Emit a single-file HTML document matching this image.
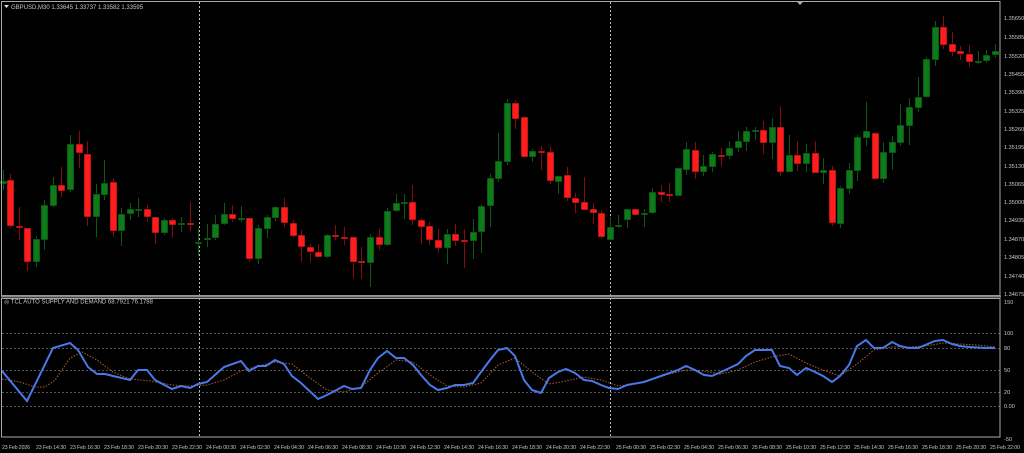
<!DOCTYPE html>
<html><head><meta charset="utf-8"><style>
html,body{margin:0;padding:0;background:#000;width:1024px;height:453px;overflow:hidden}
svg{display:block}
text{font-family:"Liberation Sans",sans-serif;fill:#c8c8c8}
.t text{font-size:5.2px}
</style></head><body>
<svg id="s" width="1024" height="453" xmlns="http://www.w3.org/2000/svg">
<rect width="1024" height="453" fill="#000"/>
<g id="grid" stroke="#555" stroke-dasharray="2,2" stroke-width="1">
<line x1="2" y1="333.5" x2="1000" y2="333.5"/><line x1="2" y1="348.5" x2="1000" y2="348.5"/>
<line x1="2" y1="370.5" x2="1000" y2="370.5"/><line x1="2" y1="392.5" x2="1000" y2="392.5"/>
<line x1="2" y1="406.5" x2="1000" y2="406.5"/>
</g>
<g stroke="#bbb" stroke-dasharray="2,2"><line x1="199.5" y1="2" x2="199.5" y2="437"/><line x1="610.5" y1="2" x2="610.5" y2="437"/></g>
<g id="c"></g>
<polyline id="o" fill="none" stroke="#b0602a" stroke-width="1" stroke-dasharray="1.5,1.5"/>
<polyline id="b" fill="none" stroke="#4a78e8" stroke-width="2"/>
<g fill="none" stroke="#a8a8a8">
<rect x="1.5" y="1.5" width="998.5" height="294"/>
<rect x="1.5" y="298.5" width="998.5" height="138.5"/>
</g>
<line x1="1" y1="296.5" x2="1001" y2="296.5" stroke="#888" stroke-width="2"/>
<path d="M797 2 L803 2 L800 5 Z" fill="#aaa"/>
<path d="M4 5 L9 5 L6.5 8 Z" fill="#ddd"/>
<text x="11" y="9" font-size="6">GBPUSD,M30  1.33645 1.33737 1.33582 1.33595</text>
<text x="4" y="303.5" font-size="6">◎ TCL AUTO SUPPLY AND DEMAND 68.7921 76.1788</text>
<g font-size="5.6">
<text x="1004" y="20">1.35650</text><text x="1004" y="39">1.35585</text><text x="1004" y="58">1.35520</text>
<text x="1004" y="76">1.35455</text><text x="1004" y="94">1.35390</text><text x="1004" y="113">1.35325</text>
<text x="1004" y="131">1.35260</text><text x="1004" y="149">1.35195</text><text x="1004" y="168">1.35130</text>
<text x="1004" y="186">1.35065</text><text x="1004" y="204">1.35000</text><text x="1004" y="222">1.34935</text>
<text x="1004" y="241">1.34870</text><text x="1004" y="259">1.34805</text><text x="1004" y="278">1.34740</text>
<text x="1004" y="296">1.34675</text>
<text x="1004" y="304">150</text><text x="1004" y="335">100</text><text x="1004" y="350">80</text>
<text x="1004" y="372">50</text><text x="1004" y="394">20</text><text x="1004" y="408">0.00</text>
<text x="1004" y="441">-50</text>
</g>
<g class="t">
<text x="2" y="449" textLength="28">23 Feb 2026</text><text x="36" y="449" textLength="30">23 Feb 14:30</text><text x="70" y="449" textLength="30">23 Feb 16:30</text>
<text x="104" y="449" textLength="30">23 Feb 18:30</text><text x="138" y="449" textLength="30">23 Feb 20:30</text><text x="172" y="449" textLength="30">23 Feb 22:30</text>
<text x="206" y="449" textLength="30">24 Feb 00:30</text><text x="240" y="449" textLength="30">24 Feb 02:30</text><text x="274" y="449" textLength="30">24 Feb 04:30</text>
<text x="308" y="449" textLength="30">24 Feb 06:30</text><text x="342" y="449" textLength="30">24 Feb 08:30</text><text x="376" y="449" textLength="30">24 Feb 10:30</text>
<text x="410" y="449" textLength="30">24 Feb 12:30</text><text x="444" y="449" textLength="30">24 Feb 14:30</text><text x="478" y="449" textLength="30">24 Feb 16:30</text>
<text x="512" y="449" textLength="30">24 Feb 18:30</text><text x="546" y="449" textLength="30">24 Feb 20:30</text><text x="580" y="449" textLength="30">24 Feb 22:30</text>
<text x="616" y="449" textLength="30">25 Feb 00:30</text><text x="650" y="449" textLength="30">25 Feb 02:30</text><text x="684" y="449" textLength="30">25 Feb 04:30</text>
<text x="718" y="449" textLength="30">25 Feb 06:30</text><text x="752" y="449" textLength="30">25 Feb 08:30</text><text x="786" y="449" textLength="30">25 Feb 10:30</text>
<text x="820" y="449" textLength="30">25 Feb 12:30</text><text x="854" y="449" textLength="30">25 Feb 14:30</text><text x="888" y="449" textLength="30">25 Feb 16:30</text>
<text x="922" y="449" textLength="30">25 Feb 18:30</text><text x="956" y="449" textLength="30">25 Feb 20:30</text><text x="990" y="449" textLength="30">25 Feb 22:00</text>
</g>
</svg>
<script>
var C=[[3,'g',181,184,170,190],[10,'r',180,226,174,228],[19,'r',226,228,207,240],[27,'r',228,262,228,271],[36,'g',239,262,236,267],[44,'g',205,240,200,250],[53,'g',185,206,177,207],[61,'r',185,191,167,197],[70,'g',144,190,135,192],[79,'r',144,153,131,168],[87,'r',154,217,141,226],[96,'g',194,217,184,237],[104,'g',183,195,160,200],[113,'r',182,231,178,237],[121,'g',214,231,208,246],[130,'g',209,214,203,220],[138,'g',209,210,198,217],[147,'r',209,217,205,222],[155,'r',217,233,217,244],[164,'g',220,233,218,235],[172,'r',220,225,218,238],[181,'g',223,225,217,232],[190,'r',223,225,202,231],[198,'g',242,243,228,256],[207,'g',238,239,224,247],[215,'g',224,238,215,240],[224,'g',214,224,203,225],[232,'r',214,219,205,222],[241,'g',218,219,206,222],[249,'r',218,259,218,262],[258,'g',228,259,225,264],[267,'g',217,229,215,238],[275,'g',207,218,206,221],[284,'r',207,223,198,227],[293,'r',223,236,220,238],[301,'r',235,247,230,262],[310,'r',247,252,244,262],[318,'r',252,257,244,258],[327,'g',235,257,234,258],[335,'r',235,237,225,240],[344,'r',237,238,227,245],[353,'r',237,262,237,278],[361,'r',261,263,247,279],[370,'g',237,263,234,287],[379,'r',237,245,229,250],[387,'g',211,245,208,246],[396,'g',203,211,194,212],[404,'g',202,203,194,219],[412,'r',202,220,185,225],[421,'r',220,227,218,244],[429,'r',226,240,222,245],[438,'r',240,248,229,253],[447,'g',234,248,229,264],[455,'r',234,241,224,246],[464,'r',240,241,229,268],[473,'g',232,241,219,259],[481,'g',206,232,204,253],[490,'g',178,206,174,227],[498,'g',161,179,133,182],[507,'g',103,162,99,165],[515,'r',103,119,100,129],[524,'r',117,157,116,157],[532,'g',151,157,149,162],[541,'r',151,153,146,170],[550,'r',152,181,147,184],[558,'g',176,182,176,194],[567,'r',175,198,167,201],[575,'r',198,203,193,213],[584,'r',202,210,177,210],[593,'r',209,213,203,224],[601,'r',213,237,210,239],[610,'g',227,240,217,240],[618,'g',225,227,215,228],[627,'g',209,220,209,228],[635,'r',209,215,209,215],[644,'g',213,214,209,227],[652,'g',192,213,188,214],[661,'r',192,195,185,202],[669,'r',194,195,183,202],[678,'g',168,196,168,196],[686,'g',149,170,142,175],[695,'r',150,172,142,179],[703,'g',166,172,155,176],[712,'g',154,167,152,172],[721,'r',155,156,148,166],[729,'g',148,156,141,159],[738,'g',141,148,131,152],[746,'g',131,142,127,151],[755,'g',130,131,127,140],[763,'r',130,143,121,154],[772,'g',127,143,118,159],[780,'r',127,172,106,176],[789,'g',155,172,135,172],[797,'r',155,164,141,171],[806,'g',153,164,144,172],[815,'r',153,173,141,173],[823,'g',170,173,158,184],[832,'r',170,223,166,226],[840,'g',188,224,186,228],[849,'g',170,189,163,194],[857,'g',137,171,135,181],[866,'g',131,138,102,146],[875,'r',133,179,132,180],[883,'g',152,179,142,183],[892,'g',142,153,136,170],[900,'g',125,143,104,146],[909,'g',107,126,98,145],[918,'g',97,108,77,112],[926,'g',59,97,57,98],[935,'g',27,60,21,66],[943,'r',27,45,16,49],[952,'r',44,52,32,56],[960,'r',51,54,46,60],[969,'r',54,62,45,67],[978,'g',61,63,51,64],[986,'g',55,61,50,63],[995,'g',51,55,44,58]];
var h='';C.forEach(function(c){var x=c[0],bc=c[1]=='r'?'#ff1c1c':'#0e7a1a',wc=c[1]=='r'?'#8a0a0a':'#0a5a12';var t=c[2],b=Math.max(c[3],t+2);
h+='<line x1="'+(x+.5)+'" y1="'+c[4]+'" x2="'+(x+.5)+'" y2="'+c[5]+'" stroke="'+wc+'"/>';
h+='<rect x="'+(x-3)+'" y="'+t+'" width="7" height="'+(b-t)+'" fill="'+bc+'" stroke="#000" stroke-width=".5"/>';});
document.getElementById('c').innerHTML=h;
document.getElementById('b').setAttribute('points',"2,371 27,401 53,348 70,343 78,350 88,367 97,374 105,374 113,376 130,380 138,370 147,370 155,380 172,389 181,386 190,388 198,384 207,382 224,367 241,361 249,371 258,366 266,366 275,360 284,364 292,376 301,383 318,399 327,395 344,386 352,389 361,388 370,370 378,358 387,351 396,358 404,358 413,365 421,375 430,385 438,390 447,388 455,385 464,385 473,383 481,372 490,360 498,350 507,348 515,356 524,380 532,390 541,393 549,378 558,372 566,369 575,373 584,380 592,381 601,385 609,388 618,389 627,385 644,382 661,376 678,370 686,366 695,370 704,375 712,376 721,372 738,364 746,356 755,350 763,350 772,350 780,366 789,368 797,375 806,368 815,372 823,376 832,382 840,376 849,365 857,346 866,340 874,348 883,348 892,342 900,346 909,348 918,348 935,341 943,340 952,344 960,346 969,347 986,348 995,348");
document.getElementById('o').setAttribute('points',"2,379 20,382 35,387 45,387 55,380 70,358 82,352 97,360 113,372 130,379 150,381 172,385 190,386 207,385 224,380 241,371 258,366 275,362 292,364 310,378 327,390 344,392 361,387 378,373 396,360 413,362 430,375 447,386 464,387 481,383 498,365 515,358 532,372 549,384 566,381 584,377 601,380 618,386 635,384 652,379 669,374 686,370 704,371 721,374 738,370 755,362 772,357 789,354 806,363 823,370 840,376 857,364 874,350 892,347 909,347 926,346 943,343 960,344 977,345 995,347");
</script>
</body></html>
